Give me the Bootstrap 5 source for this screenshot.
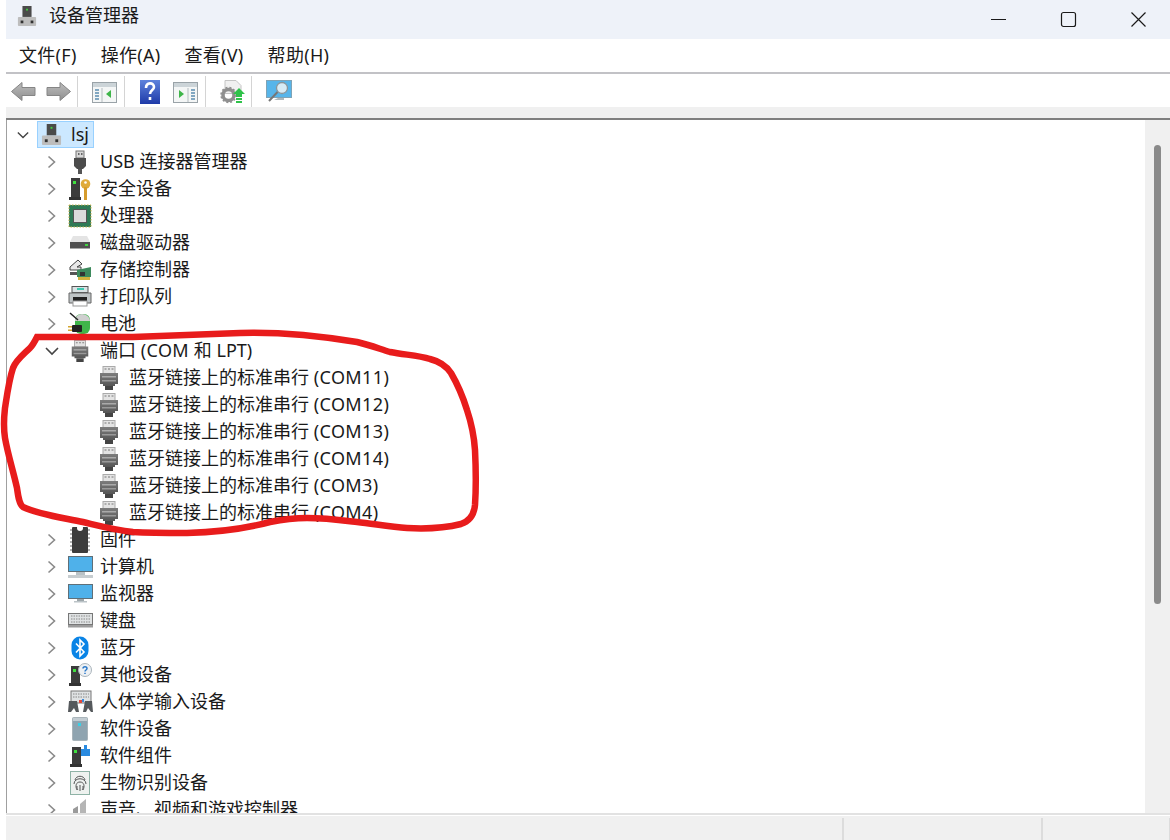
<!DOCTYPE html>
<html lang="zh-CN">
<head>
<meta charset="utf-8">
<title>设备管理器</title>
<link href="https://cdn.jsdelivr.net/npm/bootstrap@5.3.0/dist/css/bootstrap.min.css" rel="stylesheet">
<style>
html,body{height:840px;overflow:hidden;background:#fff}
body{font-family:"Noto Sans","Noto Sans CJK SC",sans-serif;font-size:18px;color:#1a1a1a;line-height:27px}
.winwrap{margin-left:6px;height:840px;position:relative}
.titlebar{height:39px;background:#eef2f9;padding-left:11px;padding-top:6px}
.tt{margin-left:12px;margin-top:-4px}
.wctl{margin-left:auto;margin-top:-6px;height:39px}
.wctl svg{display:block}
.ctlbox{width:70px;height:30px}
.ctlmax{margin-right:3px}
.ctlclose{width:64px}
.menubar{height:33px;padding-left:13px;gap:24px;padding-top:1px}
.menubar span{display:block;line-height:31px;letter-spacing:.3px}
.rule1{height:2px;background:#c2c2c6}
.toolbar{height:33px;padding-left:5px;padding-top:2px}
.toolbar svg{display:block;flex:none}
.tsep{width:1px;height:31px;background:#d4d4d4;flex:none;margin:0 14px 0 6px}
.tfwd{margin-left:10px}
.tgap7{margin-left:7px}
.thelp{margin-left:1px}
.tgap13{margin-left:13px}
.band{height:11px;background:#f0f0f0}
.rule2{height:2px;background:#7f7f7f}
.treewrap{height:693px;border-left:1px solid #a0a0a0}
.treearea{overflow:hidden;padding-top:1px;min-width:0}
.treerow{height:27px;white-space:nowrap;position:relative}
.chev{width:12px;flex:none;display:block}
.chevwide{width:14px;margin:0 -1px;flex:none;display:block}
.ic{flex:none;display:block}
.slot{width:24px;margin:0 8px 0 10px;flex:none}
.d1{padding-left:39px}
.d2{padding-left:93px}
.d2 .ic{margin-right:11px}
.lat{letter-spacing:.4px}
.rootrow{padding-left:10px}
.rootsel{background:#cce8ff;border:1px solid #99d1ff;height:27px;width:57px;margin-left:8px;padding-left:3px}
.rootsel span{margin-left:9px}
.sbar{width:25px;background:#f0f0f0;flex:none;padding-top:25px;padding-left:9px}
.sthumb{width:7px;height:459px;background:#8a8a8a;border-radius:4px}
.rule3{height:3px;background:#e2e2e2;border-bottom:1px solid #fff}
.statusbar{height:24px;background:#f0f0f0;padding-top:2px}
.scell{border-left:2px solid #dcdcdc;flex:none}
.scw2{width:199px}
.scw3{width:128px}
.scw4{width:1px;border-left-width:1px}
.ink{position:absolute;left:0;top:0;pointer-events:none}
</style>
</head>
<body>
<svg width="0" height="0" class="position-absolute">
<defs>
<linearGradient id="garr" x1="0" y1="0" x2="0" y2="1"><stop offset="0" stop-color="#bdbdbd"/><stop offset="1" stop-color="#8f8f8f"/></linearGradient>
<linearGradient id="ghelp" x1="0" y1="0" x2="0" y2="1"><stop offset="0" stop-color="#5f83dc"/><stop offset="1" stop-color="#1e3aa8"/></linearGradient>
<linearGradient id="gport" x1="0" y1="0" x2="0" y2="1"><stop offset="0" stop-color="#7d7d7d"/><stop offset="1" stop-color="#555"/></linearGradient>
<symbol id="chevr" viewBox="0 0 12 14"><path d="M2.500 1.500l6 5.500-6 5.500" fill="none" stroke="#8a8a8a" stroke-width="1.600"/></symbol>
<symbol id="chevd" viewBox="0 0 14 12"><path d="M1 3l6 6 6-6" fill="none" stroke="#444" stroke-width="1.600"/></symbol>
<symbol id="host" viewBox="0 0 22 22">
<rect x="6" y="0" width="10" height="12" fill="#4a4a4a"/><rect x="10" y="3" width="2" height="2" fill="#3fd13f"/>
<rect x="1" y="12" width="20" height="10" rx="1" fill="#bdbdbd"/><rect x="4" y="16" width="3" height="3" fill="#333"/><rect x="15" y="16" width="3" height="3" fill="#333"/></symbol>
<symbol id="usb" viewBox="0 0 14 24"><rect x="3" y="1" width="8" height="7" fill="#d8d8d8" stroke="#777"/><rect x="5" y="3" width="1.500" height="2" fill="#666"/><rect x="8" y="3" width="1.500" height="2" fill="#666"/><path d="M1 8h12v8l-3 3H4l-3-3z" fill="#4c4c4c"/><rect x="5" y="19" width="4" height="5" fill="#555"/></symbol>
<symbol id="sec" viewBox="0 0 22 24"><path d="M2 1h9v19H2z" fill="#3c3c3c"/><path d="M0 20h12v3H0z" fill="#333"/><rect x="4" y="4" width="3" height="3" fill="#3fe03f"/><circle cx="16.500" cy="7" r="4.800" fill="#e0ab3b"/><rect x="15" y="10" width="3" height="13" fill="#d69c2d"/><circle cx="16.500" cy="5.500" r="1.300" fill="#fff"/></symbol>
<symbol id="cpu" viewBox="0 0 24 24"><rect x="1" y="1" width="22" height="22" fill="#2f7a56"/><rect x="1" y="1" width="22" height="22" fill="none" stroke="#c5b24d" stroke-width="1" stroke-dasharray="1.500 1.500"/><rect x="5.500" y="5.500" width="13" height="13" fill="#dcdcdc" stroke="#555"/></symbol>
<symbol id="disk" viewBox="0 0 22 13"><path d="M4 0h14l3 6H1z" fill="#e4e4e4"/><rect x="1" y="6" width="20" height="6.500" fill="#4f4f4f"/><rect x="16" y="8" width="3" height="2" fill="#3fd13f"/></symbol>
<symbol id="stor" viewBox="0 0 24 24"><path d="M2 9l8-7 4 4-5 3h4v3H2z" fill="#e8e8e8" stroke="#444"/><rect x="2" y="14" width="11" height="3" fill="#555"/><path d="M9 12l14-3v10H9z" fill="#3d8a5d"/><rect x="12" y="14" width="5" height="4" fill="#333"/><path d="M10 19h12v3H10z" fill="#d3b23d"/></symbol>
<symbol id="prn" viewBox="0 0 24 22"><rect x="4" y="0.500" width="16" height="6" fill="#d9e2e4" stroke="#555"/><rect x="9" y="2" width="7" height="2" fill="#3fc9b0"/><path d="M1 7h22v10H1z" fill="#bfc4c6" stroke="#666"/><rect x="5" y="11" width="14" height="4" fill="#222"/><rect x="5" y="15" width="14" height="5" fill="#fff" stroke="#999"/></symbol>
<symbol id="bat" viewBox="0 0 24 24"><rect x="7" y="2" width="15" height="20" rx="6" fill="#3fb54a"/><path d="M7 9c0-4 3-7 7-7s8 3 8 7z" fill="#cfcfcf"/><path d="M2 1l8 7" stroke="#222" stroke-width="1.500"/><rect x="4" y="13" width="10" height="7" rx="1" fill="#222"/><rect x="0" y="14" width="4" height="1.500" fill="#d4a62f"/><rect x="0" y="17.500" width="4" height="1.500" fill="#d4a62f"/></symbol>
<symbol id="port" viewBox="0 0 18 24"><rect x="3" y="0.500" width="12" height="7" fill="#e3e3e3" stroke="#aaa"/><path d="M4.500 3h2M8 3h2M11.500 3h2" stroke="#777"/><path d="M0 7h18v11h-3v2H3v-2H0z" fill="url(#gport)"/><rect x="2" y="10" width="14" height="1.500" fill="#aaa"/><rect x="2" y="14" width="14" height="1.500" fill="#999"/><rect x="5" y="20" width="8" height="4" fill="#444"/></symbol>
<symbol id="fw" viewBox="0 0 20 26"><rect x="2" y="0" width="16" height="26" rx="1" fill="#3c3c3c"/><path d="M0 3h2M0 7h2M0 11h2M0 15h2M0 19h2M0 23h2M18 3h2M18 7h2M18 11h2M18 15h2M18 19h2M18 23h2" stroke="#999" stroke-width="1.500"/><circle cx="10" cy="1" r="3" fill="#fff"/></symbol>
<symbol id="pc" viewBox="0 0 25 22"><rect x="0.500" y="0.500" width="24" height="15" fill="#4fb1ea" stroke="#5f6f78"/><path d="M8 16h9v3H8z" fill="#b9c2c6"/><rect x="0" y="19" width="25" height="3" fill="#c7cdd0"/></symbol>
<symbol id="mon" viewBox="0 0 25 19"><rect x="0.500" y="0.500" width="24" height="14" fill="#4fb1ea" stroke="#5f6f78"/><path d="M9 15h7v2H9z" fill="#9da6aa"/><rect x="6" y="17" width="13" height="1.500" fill="#bbc3c7"/></symbol>
<symbol id="kbd" viewBox="0 0 25 15"><rect x="0.500" y="0.500" width="24" height="11" fill="#dfe2e3" stroke="#777"/><path d="M3 3h19M3 6h19M3 9h19" stroke="#8a8a8a" stroke-width="1.200" stroke-dasharray="1.500 1"/><rect x="0" y="12" width="25" height="2.500" fill="#9c9c9c"/></symbol>
<symbol id="bt" viewBox="0 0 18 24"><rect x="0.500" y="0.500" width="17" height="23" rx="8.500" fill="#0a84e6"/><path d="M5 7.500l8 8.500-4 4V4l4 4-8 8.500" fill="none" stroke="#fff" stroke-width="1.600"/></symbol>
<symbol id="oth" viewBox="0 0 23 24"><path d="M2 3h9v17H2z" fill="#3c3c3c"/><path d="M0 20h12v3H0z" fill="#333"/><rect x="4" y="6" width="3" height="3" fill="#3fe03f"/><circle cx="16" cy="7" r="6.500" fill="#eef1f4" stroke="#aab4bb"/><path d="M14 5.500c0-2.500 4-2.500 4 0 0 1.500-2 1.500-2 3M16 9.800v1.300" fill="none" stroke="#2a78c9" stroke-width="1.500"/></symbol>
<symbol id="hid" viewBox="0 0 25 23"><rect x="3" y="1" width="20" height="12" fill="#dfe2e3" stroke="#777"/><path d="M5 4h16M5 7h16" stroke="#888" stroke-dasharray="1.500 1"/><path d="M1 11h8l2 11H8l-2-4-3 4H0z" fill="#55595c"/><path d="M24 11h-7l-2 11h3l2-4 3 4h2z" fill="#55595c"/><rect x="11" y="10" width="3" height="3" fill="#e24a3b"/><rect x="14" y="9" width="2" height="3" fill="#3d8ad9"/></symbol>
<symbol id="sw" viewBox="0 0 16 24"><rect x="0.500" y="0.500" width="15" height="23" rx="1" fill="#8fa4b0" stroke="#a9b4ba"/><rect x="1" y="1" width="14" height="3" fill="#c2ccd2"/><rect x="6" y="6" width="3" height="3" fill="#39d0e6"/></symbol>
<symbol id="swc" viewBox="0 0 20 24"><path d="M2 3h9v17H2z" fill="#3c3c3c"/><path d="M0 20h12v3H0z" fill="#333"/><rect x="4" y="6" width="3" height="3" fill="#3fe03f"/><path d="M11 5h3V1h3v4h3v7h-9z" fill="#2b8be0"/></symbol>
<symbol id="bio" viewBox="0 0 20 24"><rect x="0.500" y="0.500" width="19" height="23" fill="#eef2ef" stroke="#8fb3a6"/><path d="M5 9c1-5 9-5 10 0M4 13c0-7 12-7 12 0M7 19c-2-4-1-8 3-8s5 4 3 8M10 14v6M7 15c0 2 0 3 1 4M13 15c0 2 0 3-1 4" fill="none" stroke="#555" stroke-width="1"/></symbol>
<symbol id="snd" viewBox="0 0 16 24"><path d="M1 11l5-3v16H1z" fill="#9a9a9a"/><path d="M8 6l6-5v23H8z" fill="#b5b5b5"/></symbol>
</defs>
</svg>

<div class="winwrap">
  <div class="titlebar d-flex align-items-start">
    <svg class="ic" width="20" height="20"><use href="#host"/></svg>
    <span class="tt">设备管理器</span>
    <div class="wctl d-flex align-items-center">
      <div class="ctlbox d-flex align-items-center justify-content-center"><svg width="17" height="17"><path d="M1 8.500h15" stroke="#1a1a1a" stroke-width="1"/></svg></div>
      <div class="ctlbox ctlmax d-flex align-items-center justify-content-center"><svg width="17" height="17"><rect x="1.500" y="1.500" width="14" height="14" rx="2" fill="none" stroke="#1a1a1a" stroke-width="1.200"/></svg></div>
      <div class="ctlbox ctlclose d-flex align-items-center justify-content-center"><svg width="17" height="17"><path d="M1.500 1.500l14 14M15.500 1.500l-14 14" stroke="#1a1a1a" stroke-width="1.200"/></svg></div>
    </div>
  </div>
  <div class="menubar d-flex">
    <span>文件(F)</span><span>操作(A)</span><span>查看(V)</span><span>帮助(H)</span>
  </div>
  <div class="rule1"></div>
  <div class="toolbar d-flex align-items-center">
    <svg width="25" height="21"><path d="M0.500 10.500L11 1.500v5h13v8H11v5z" fill="url(#garr)" stroke="#858585"/></svg>
    <svg class="tfwd" width="25" height="21"><path d="M24.500 10.500L14 1.500v5H1v8h13v5z" fill="url(#garr)" stroke="#858585"/></svg>
    <div class="tsep"></div>
    <svg width="25" height="22"><rect x="0.500" y="1.500" width="24" height="20" fill="#f4f6f6" stroke="#9aa3a8"/><rect x="1" y="2" width="23" height="4" fill="#ccd4d8"/><path d="M3 9h4M3 12h4M3 15h4M3 18h4" stroke="#5b8db0" stroke-width="1.500"/><line x1="10" y1="7" x2="10" y2="21" stroke="#b5bcc0"/><path d="M19 9v8l-5-4z" fill="#3fb54a"/></svg>
    <div class="tsep tgap7"></div>
    <svg class="thelp" width="20" height="24"><rect width="20" height="24" fill="url(#ghelp)"/><path d="M6 8c0-6 8-6 8-1 0 3-4 3-4 7M10 17v3" fill="none" stroke="#fff" stroke-width="2.600"/></svg>
    <svg class="tgap13" width="25" height="22"><rect x="0.500" y="1.500" width="24" height="20" fill="#f4f6f6" stroke="#9aa3a8"/><rect x="1" y="2" width="23" height="4" fill="#ccd4d8"/><path d="M18 9h4M18 12h4M18 15h4M18 18h4" stroke="#5b8db0" stroke-width="1.500"/><line x1="15" y1="7" x2="15" y2="21" stroke="#b5bcc0"/><path d="M6 9v8l5-4z" fill="#3fb54a"/></svg>
    <div class="tsep tgap7"></div>
    <svg width="25" height="24"><path d="M5 0.500h11l5 5v8H5z" fill="#f0f0f0" stroke="#c4c4c4"/><circle cx="8.500" cy="15" r="5.500" fill="none" stroke="#8f8f8f" stroke-width="3.500"/><circle cx="8.500" cy="15" r="7.500" fill="none" stroke="#8f8f8f" stroke-width="1.500" stroke-dasharray="2 2"/><path d="M19 8l6 6h-3v3h-6v-3h-3z" fill="#2fc24a"/><rect x="16" y="18" width="6" height="2" fill="#2fc24a"/><rect x="16" y="21" width="6" height="2" fill="#2fc24a"/></svg>
    <div class="tsep"></div>
    <svg width="26" height="24"><rect x="0.500" y="0.500" width="25" height="17" fill="#57b5ea" stroke="#7fa3b6"/><circle cx="16" cy="8" r="5.500" fill="#d8ebf5" stroke="#8a959b" stroke-width="1.300"/><path d="M11.500 12L3 21" stroke="#777" stroke-width="2"/><path d="M12 18h6v2H8z" fill="#aeb8bd"/></svg>
  </div>
  <div class="band"></div>
  <div class="rule2"></div>
  <div class="treewrap d-flex">
    <div class="treearea flex-grow-1">
      <div class="treerow rootrow d-flex align-items-center">
        <svg class="chev" width="14" height="12"><use href="#chevd"/></svg>
        <div class="rootsel d-flex align-items-center"><svg class="ic" width="21" height="21"><use href="#host"/></svg><span>lsj</span></div>
      </div>
      <div class="treerow d1 d-flex align-items-center"><svg class="chev" width="12" height="14"><use href="#chevr"/></svg><span class="slot d-flex justify-content-center"><svg class="ic" width="14" height="24"><use href="#usb"/></svg></span><span>USB 连接器管理器</span></div>
      <div class="treerow d1 d-flex align-items-center"><svg class="chev" width="12" height="14"><use href="#chevr"/></svg><span class="slot d-flex justify-content-center"><svg class="ic" width="22" height="24"><use href="#sec"/></svg></span><span>安全设备</span></div>
      <div class="treerow d1 d-flex align-items-center"><svg class="chev" width="12" height="14"><use href="#chevr"/></svg><span class="slot d-flex justify-content-center"><svg class="ic" width="24" height="24"><use href="#cpu"/></svg></span><span>处理器</span></div>
      <div class="treerow d1 d-flex align-items-center"><svg class="chev" width="12" height="14"><use href="#chevr"/></svg><span class="slot d-flex justify-content-center"><svg class="ic" width="22" height="13"><use href="#disk"/></svg></span><span>磁盘驱动器</span></div>
      <div class="treerow d1 d-flex align-items-center"><svg class="chev" width="12" height="14"><use href="#chevr"/></svg><span class="slot d-flex justify-content-center"><svg class="ic" width="24" height="24"><use href="#stor"/></svg></span><span>存储控制器</span></div>
      <div class="treerow d1 d-flex align-items-center"><svg class="chev" width="12" height="14"><use href="#chevr"/></svg><span class="slot d-flex justify-content-center"><svg class="ic" width="24" height="22"><use href="#prn"/></svg></span><span>打印队列</span></div>
      <div class="treerow d1 d-flex align-items-center"><svg class="chev" width="12" height="14"><use href="#chevr"/></svg><span class="slot d-flex justify-content-center"><svg class="ic" width="24" height="24"><use href="#bat"/></svg></span><span>电池</span></div>
      <div class="treerow d1 d-flex align-items-center"><svg class="chevwide" width="14" height="12"><use href="#chevd"/></svg><span class="slot d-flex justify-content-center"><svg class="ic" width="18" height="22"><use href="#port"/></svg></span><span>端口 <span class="lat">(COM</span> 和 LPT)</span></div>
      <div class="treerow d2 d-flex align-items-center"><svg class="ic" width="18" height="24"><use href="#port"/></svg><span>蓝牙链接上的标准串行 <span class="lat">(COM11)</span></span></div>
      <div class="treerow d2 d-flex align-items-center"><svg class="ic" width="18" height="24"><use href="#port"/></svg><span>蓝牙链接上的标准串行 <span class="lat">(COM12)</span></span></div>
      <div class="treerow d2 d-flex align-items-center"><svg class="ic" width="18" height="24"><use href="#port"/></svg><span>蓝牙链接上的标准串行 <span class="lat">(COM13)</span></span></div>
      <div class="treerow d2 d-flex align-items-center"><svg class="ic" width="18" height="24"><use href="#port"/></svg><span>蓝牙链接上的标准串行 <span class="lat">(COM14)</span></span></div>
      <div class="treerow d2 d-flex align-items-center"><svg class="ic" width="18" height="24"><use href="#port"/></svg><span>蓝牙链接上的标准串行 <span class="lat">(COM3)</span></span></div>
      <div class="treerow d2 d-flex align-items-center"><svg class="ic" width="18" height="24"><use href="#port"/></svg><span>蓝牙链接上的标准串行 <span class="lat">(COM4)</span></span></div>
      <div class="treerow d1 d-flex align-items-center"><svg class="chev" width="12" height="14"><use href="#chevr"/></svg><span class="slot d-flex justify-content-center"><svg class="ic" width="20" height="26"><use href="#fw"/></svg></span><span>固件</span></div>
      <div class="treerow d1 d-flex align-items-center"><svg class="chev" width="12" height="14"><use href="#chevr"/></svg><span class="slot d-flex justify-content-center"><svg class="ic" width="25" height="22"><use href="#pc"/></svg></span><span>计算机</span></div>
      <div class="treerow d1 d-flex align-items-center"><svg class="chev" width="12" height="14"><use href="#chevr"/></svg><span class="slot d-flex justify-content-center"><svg class="ic" width="25" height="19"><use href="#mon"/></svg></span><span>监视器</span></div>
      <div class="treerow d1 d-flex align-items-center"><svg class="chev" width="12" height="14"><use href="#chevr"/></svg><span class="slot d-flex justify-content-center"><svg class="ic" width="25" height="15"><use href="#kbd"/></svg></span><span>键盘</span></div>
      <div class="treerow d1 d-flex align-items-center"><svg class="chev" width="12" height="14"><use href="#chevr"/></svg><span class="slot d-flex justify-content-center"><svg class="ic" width="18" height="24"><use href="#bt"/></svg></span><span>蓝牙</span></div>
      <div class="treerow d1 d-flex align-items-center"><svg class="chev" width="12" height="14"><use href="#chevr"/></svg><span class="slot d-flex justify-content-center"><svg class="ic" width="23" height="24"><use href="#oth"/></svg></span><span>其他设备</span></div>
      <div class="treerow d1 d-flex align-items-center"><svg class="chev" width="12" height="14"><use href="#chevr"/></svg><span class="slot d-flex justify-content-center"><svg class="ic" width="25" height="23"><use href="#hid"/></svg></span><span>人体学输入设备</span></div>
      <div class="treerow d1 d-flex align-items-center"><svg class="chev" width="12" height="14"><use href="#chevr"/></svg><span class="slot d-flex justify-content-center"><svg class="ic" width="16" height="24"><use href="#sw"/></svg></span><span>软件设备</span></div>
      <div class="treerow d1 d-flex align-items-center"><svg class="chev" width="12" height="14"><use href="#chevr"/></svg><span class="slot d-flex justify-content-center"><svg class="ic" width="20" height="24"><use href="#swc"/></svg></span><span>软件组件</span></div>
      <div class="treerow d1 d-flex align-items-center"><svg class="chev" width="12" height="14"><use href="#chevr"/></svg><span class="slot d-flex justify-content-center"><svg class="ic" width="20" height="24"><use href="#bio"/></svg></span><span>生物识别设备</span></div>
      <div class="treerow d1 d-flex align-items-center"><svg class="chev" width="12" height="14"><use href="#chevr"/></svg><span class="slot d-flex justify-content-center"><svg class="ic" width="16" height="24"><use href="#snd"/></svg></span><span>声音、视频和游戏控制器</span></div>
    </div>
    <div class="sbar"><div class="sthumb"></div></div>
  </div>
  <div class="rule3"></div>
  <div class="statusbar d-flex">
    <div class="flex-grow-1"></div>
    <div class="scell scw2"></div>
    <div class="scell scw3"></div>
    <div class="scell scw4"></div>
  </div>
</div>
<svg class="ink" width="1170" height="840" viewBox="0 0 1170 840"><path d="M37 337C70 337 100 337 133 337C160 336 187 335 240 333C275 332 320 336 357 342C370 345 380 349 390 352C405 355 418 355 430 359C442 362 447 367 451 373C458 385 463 397 467 410C472 425 474 435 475 450C476 470 476 490 475 505C474 515 470 521 461 524C445 528 425 529 407 528C390 527 375 524 357 522C340 520 325 518 307 518C290 518 280 520 270 522C255 526 225 532 187 533C165 533 150 533 133 532C115 530 100 526 83 522C65 518 40 515 23 507C19 504 18 495 17 488C13 470 8 455 5 438C3 425 4 417 5 408C7 395 9 380 13 368C16 360 24 354 30 348C33 345 35 341 37 337Z" fill="none" stroke="#e81c1c" stroke-width="6.500"/></svg>
</body>
</html>
